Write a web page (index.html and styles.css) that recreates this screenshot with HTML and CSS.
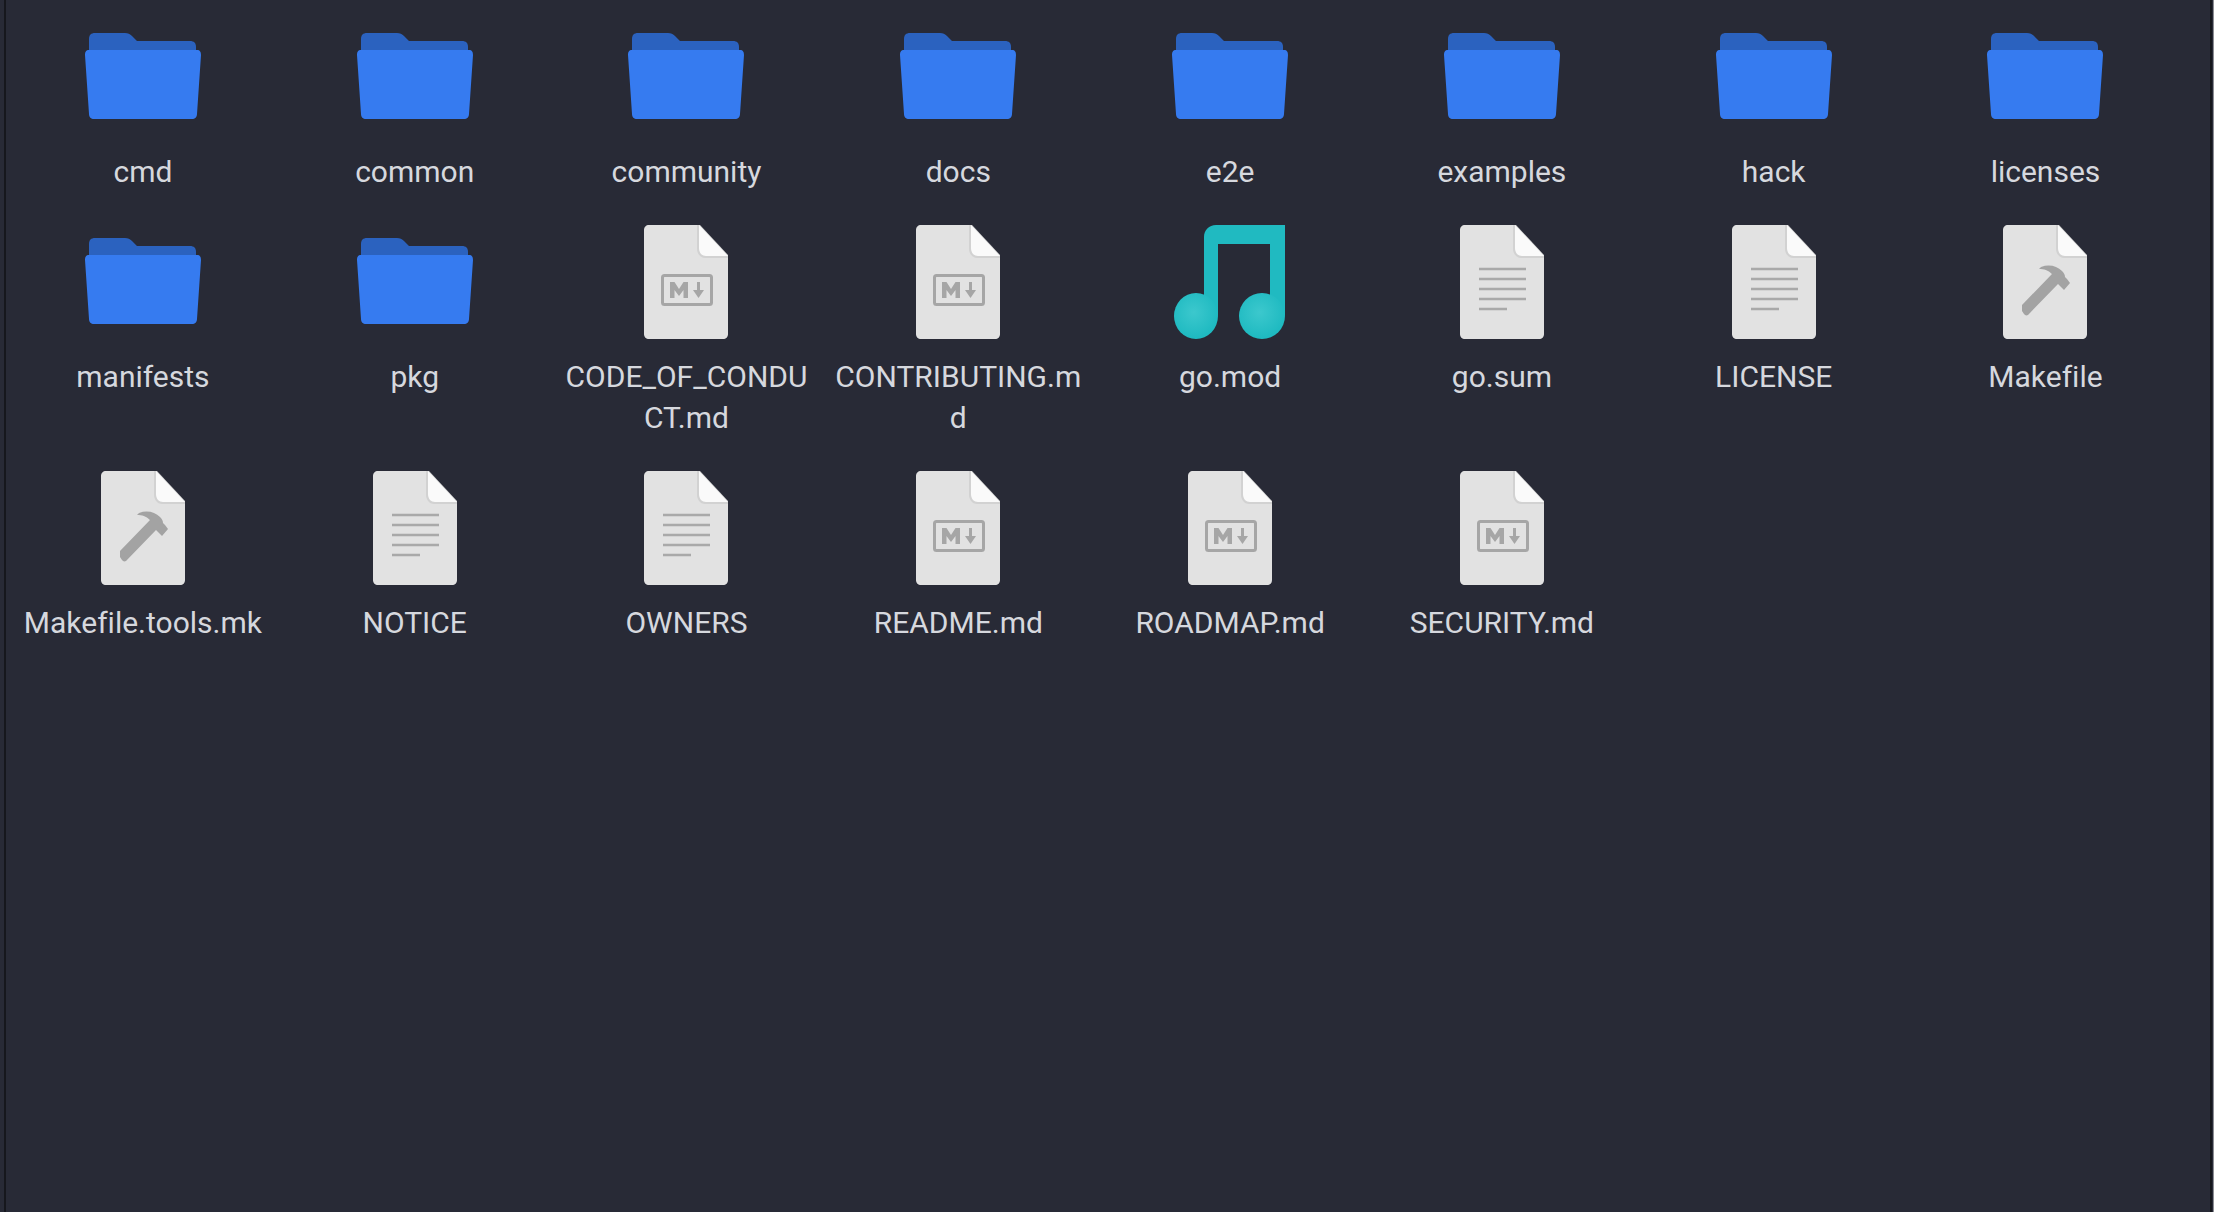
FILE: index.html
```html
<!DOCTYPE html>
<html lang="en">
<head>
    <meta charset="UTF-8">
    <title>Files</title>
    <link rel="stylesheet" href="styles.css">
</head>
<body>
    <svg class="icon-defs" width="0" height="0">
        <defs>
            <symbol id="folder" viewBox="0 0 116 86">
                <path fill="#2b62bf" d="M4 6C4 2 6 0 10 0H40C43 0 45 1 47 3L52 8H105C109 8 111 10 111 14V30H4Z"/>
                <path fill="#367bf0" d="M4 17H112C115 17 116 19 116 22L112 81C112 84 110 86 107 86H9C6 86 4 84 4 81L0 22C0 19 1 17 4 17Z"/>
            </symbol>
            <symbol id="page" viewBox="0 0 84 114">
                <path fill="#e2e2e2" d="M5 0H54L84 32V109C84 112 82 114 79 114H5C2 114 0 112 0 109V5C0 2 2 0 5 0Z"/>
                <path fill="#d2d2d2" d="M53 0V24C53 28 56 33 61 33H84V30L56 0Z"/>
                <path fill="#fafafa" d="M55 0V23C55 28 58 31 62 31H84Z"/>
            </symbol>
            <symbol id="md" viewBox="0 0 84 114">
                <use href="#page"/>
                <rect x="18.500" y="50.500" width="49" height="29" rx="2" fill="none" stroke="#a6a6a6" stroke-width="3"/>
                <path fill="#a6a6a6" d="M26 73V57H30.500L35 64L39.500 57H44V73H39.500V65L35 71L30.500 65V73Z"/>
                <path fill="#a6a6a6" d="M53 57H56V65H60L54.500 73L49 65H53Z"/>
            </symbol>
            <symbol id="text" viewBox="0 0 84 114">
                <use href="#page"/>
                <path stroke="#a9a9a9" stroke-width="2.400" d="M19 44H66M19 54H66M19 64H66M19 74H66M19 84H47"/>
            </symbol>
            <symbol id="make" viewBox="0 0 84 114">
                <use href="#page"/>
                <path fill="#a3a3a3" d="M19 80L49 49C45 45 41 44 36 44L38 42C46 39 54 41 59 46C61 48 62 50 62 52L64 54L67 58L61 65L57 61L55 59L25 90C23 91 22 90 21 89L19 86Z"/>
            </symbol>
            <symbol id="music" viewBox="0 0 112 114">
                <defs>
                    <radialGradient id="note-ball" cx="0.45" cy="0.42" r="0.55">
                        <stop offset="0" stop-color="#3cc8cd"/>
                        <stop offset="1" stop-color="#1fbac1"/>
                    </radialGradient>
                </defs>
                <path fill="#20bac1" d="M30 90V12C30 5 35 0 42 0H111V90H96V19H44V90Z"/>
                <ellipse cx="22" cy="91" rx="22" ry="23" fill="url(#note-ball)"/>
                <ellipse cx="88" cy="91" rx="23" ry="23" fill="url(#note-ball)"/>
            </symbol>
        </defs>
    </svg>

    <main class="file-grid">
        <div class="file"><div class="icon"><svg class="i-folder"><use href="#folder"/></svg></div><span class="name">cmd</span></div>
        <div class="file"><div class="icon"><svg class="i-folder"><use href="#folder"/></svg></div><span class="name">common</span></div>
        <div class="file"><div class="icon"><svg class="i-folder"><use href="#folder"/></svg></div><span class="name">community</span></div>
        <div class="file"><div class="icon"><svg class="i-folder"><use href="#folder"/></svg></div><span class="name">docs</span></div>
        <div class="file"><div class="icon"><svg class="i-folder"><use href="#folder"/></svg></div><span class="name">e2e</span></div>
        <div class="file"><div class="icon"><svg class="i-folder"><use href="#folder"/></svg></div><span class="name">examples</span></div>
        <div class="file"><div class="icon"><svg class="i-folder"><use href="#folder"/></svg></div><span class="name">hack</span></div>
        <div class="file"><div class="icon"><svg class="i-folder"><use href="#folder"/></svg></div><span class="name">licenses</span></div>

        <div class="file"><div class="icon"><svg class="i-folder"><use href="#folder"/></svg></div><span class="name">manifests</span></div>
        <div class="file"><div class="icon"><svg class="i-folder"><use href="#folder"/></svg></div><span class="name">pkg</span></div>
        <div class="file"><div class="icon"><svg class="i-page"><use href="#md"/></svg></div><span class="name">CODE_OF_CONDU<br>CT.md</span></div>
        <div class="file"><div class="icon"><svg class="i-page"><use href="#md"/></svg></div><span class="name">CONTRIBUTING.m<br>d</span></div>
        <div class="file"><div class="icon"><svg class="i-music"><use href="#music"/></svg></div><span class="name">go.mod</span></div>
        <div class="file"><div class="icon"><svg class="i-page"><use href="#text"/></svg></div><span class="name">go.sum</span></div>
        <div class="file"><div class="icon"><svg class="i-page"><use href="#text"/></svg></div><span class="name">LICENSE</span></div>
        <div class="file"><div class="icon"><svg class="i-page"><use href="#make"/></svg></div><span class="name">Makefile</span></div>

        <div class="file"><div class="icon"><svg class="i-page"><use href="#make"/></svg></div><span class="name">Makefile.tools.mk</span></div>
        <div class="file"><div class="icon"><svg class="i-page"><use href="#text"/></svg></div><span class="name">NOTICE</span></div>
        <div class="file"><div class="icon"><svg class="i-page"><use href="#text"/></svg></div><span class="name">OWNERS</span></div>
        <div class="file"><div class="icon"><svg class="i-page"><use href="#md"/></svg></div><span class="name">README.md</span></div>
        <div class="file"><div class="icon"><svg class="i-page"><use href="#md"/></svg></div><span class="name">ROADMAP.md</span></div>
        <div class="file"><div class="icon"><svg class="i-page"><use href="#md"/></svg></div><span class="name">SECURITY.md</span></div>
    </main>
</body>
</html>
```

FILE: styles.css
```css
html, body {
    height: 100%;
}

body {
    box-sizing: border-box;
    margin: 0;
    background-color: #282a36;
    border-right: 1px solid #8d8e93;
    color: #d6d8de;
    font-family: Roboto, "Noto Sans", sans-serif;
    overflow: hidden;
}

.icon-defs {
    position: absolute;
}

.file-grid {
    box-sizing: border-box;
    height: 100%;
    margin: 0 1px 0 4px;
    padding: 16px 0 0 1px;
    border-left: 2px solid #16171d;
    border-right: 2px solid #16171d;
    display: grid;
    grid-template-columns: repeat(8, 271.8px);
    grid-auto-rows: min-content;
}

.file {
    display: flex;
    flex-direction: column;
    align-items: center;
    padding-bottom: 29px;
}

.icon {
    height: 120px;
    margin-bottom: 15px;
    display: flex;
    align-items: center;
    justify-content: center;
}

.i-folder {
    width: 116px;
    height: 86px;
}

.i-page {
    width: 84px;
    height: 114px;
    margin-top: 1px;
}

.i-music {
    width: 112px;
    height: 114px;
    margin-top: 1px;
}

.name {
    font-size: 30px;
    line-height: 41px;
    font-variant-ligatures: none;
    text-align: center;
    white-space: nowrap;
}
```
